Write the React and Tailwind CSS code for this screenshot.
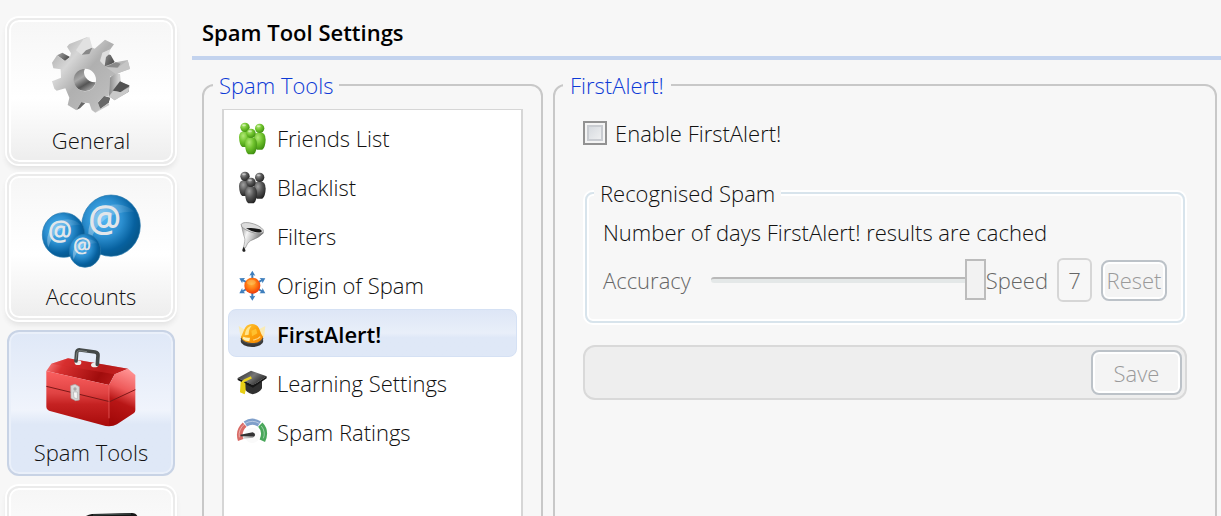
import React, { useState } from "react";
import clsx from "clsx";

function GearIcon() {
  return (
    <svg viewBox="150 105 246 240" className="w-[82px] h-20" aria-hidden="true">
      <defs>
        <linearGradient id="gearFace" x1="0" y1="0.1" x2="1" y2="0.9">
          <stop offset="0" stopColor="#a9a9a9" />
          <stop offset="0.25" stopColor="#d6d6d6" />
          <stop offset="0.45" stopColor="#b0b0b0" />
          <stop offset="0.7" stopColor="#b9b9b9" />
          <stop offset="1" stopColor="#d2d2d2" />
        </linearGradient>
        <linearGradient id="gearHole" x1="0" y1="0" x2="0.6" y2="1">
          <stop offset="0" stopColor="#6a6a6a" />
          <stop offset="0.45" stopColor="#a8a8a8" />
          <stop offset="0.75" stopColor="#555" />
          <stop offset="1" stopColor="#9a9a9a" />
        </linearGradient>
        <linearGradient id="gearDark" x1="0" y1="0" x2="1" y2="0.5">
          <stop offset="0" stopColor="#aaa" />
          <stop offset="1" stopColor="#4c4c4c" />
        </linearGradient>
        <linearGradient id="gearSide" x1="0" y1="0" x2="1" y2="0">
          <stop offset="0" stopColor="#8b8b8b" />
          <stop offset="0.5" stopColor="#d4d4d4" />
          <stop offset="1" stopColor="#606060" />
        </linearGradient>
      </defs>
      <path d="M328 235 L345 218 L360 222 L362 246 L388 256 L386 275 L344 301 L327 289 Z" fill="url(#gearSide)" />
      <path d="M360 244 L388 257 L362 277 L338 272 Z" fill="#535353" />
      <path d="M327 289 L340 272 L362 277 L388 260 L386 275 L344 301 Z" fill="#c9c9c9" />
      <path d="M298 165 L312 158 L332 165 L344 186 L318 204 L298 190 Z" fill="url(#gearDark)" />
      <path d="M243 305 L256 309 L240 325 L229 330 Z" fill="#666" />
      <path d="M294 308 L312 288 L330 294 L326 308 L301 326 Z" fill="url(#gearDark)" />
      <path d="M171 166 L187 158 L210 171 L195 183 Z" fill="url(#gearDark)" />
      <path fillRule="evenodd" fill="url(#gearFace)" d="M213 160 L201 140 L208 132 L262 111 L274 142 L284 146 L315 119 L342 133 L330 149 L308 160 L303 178 L314 199 L347 187 L383 180 L390 206 L346 223 L330 230 L328 268 L326 290 L313 288 L294 307 L301 327 L286 338 L275 330 L268 310 L244 307 L229 331 L203 315 L208 293 L196 265 L170 272 L163 266 L156 244 L183 233 L182 208 L160 205 L156 188 L171 166 L195 183 L210 171 Z M255 206 A33 34 0 1 0 255 274 A33 34 0 1 0 255 206 Z" />
      <path d="M250 118 L268 111 L277 142 L245 164 L228 151 Z" fill="#e1e1e1" />
      <path d="M277 143 L268 162 L245 164 L258 151 Z" fill="#888" />
      <path d="M300 183 L307 158 L331 148 L327 163 L318 171 L314 198 Z" fill="#dedede" />
      <path d="M318 201 L347 187 L362 191 L352 204 Z" fill="#8a8a8a" />
      <path d="M318 202 L354 203 L383 181 L390 207 L347 222 Z" fill="#c5c5c5" />
      <path d="M294 308 L312 289 L330 293 L325 309 L301 326 Z" fill="#686868" />
      <path d="M301 326 L325 309 L328 315 L286 338 Z" fill="#c7c7c7" />
      <path d="M221 239 A34 34 0 0 1 255 206 C245 220 260 248 287 247 C280 270 264 274 255 273 A34 34 0 0 1 221 239 Z" fill="url(#gearHole)" />
    </svg>
  );
}

function AccountsIcon() {
  const balls = [
    { cx: 332, cy: 180, rx: 88, ry: 92, tx: 313, ty: 196, size: 106 },
    { cx: 190, cy: 208, rx: 64, ry: 67, tx: 179, ty: 221, size: 78 },
    { cx: 254, cy: 255, rx: 47, ry: 50, tx: 245, ty: 263, size: 58 },
  ];
  return (
    <svg viewBox="125 85 297 222" className="w-[99px] h-[74px] overflow-visible" aria-hidden="true">
      <defs>
        <radialGradient id="ball" cx="0.38" cy="0.38" r="0.62">
          <stop offset="0" stopColor="#55b8f5" />
          <stop offset="0.5" stopColor="#2c8fd0" />
          <stop offset="0.85" stopColor="#07619f" />
          <stop offset="1" stopColor="#07598f" />
        </radialGradient>
        <linearGradient id="ballShine" x1="0" y1="0" x2="1" y2="0.3">
          <stop offset="0" stopColor="#fff" stopOpacity="0.4" />
          <stop offset="1" stopColor="#fff" stopOpacity="0.02" />
        </linearGradient>
      </defs>
      {balls.map((b) => (
        <g key={b.cx}>
          <ellipse cx={b.cx} cy={b.cy} rx={b.rx} ry={b.ry} fill="url(#ball)" stroke="#2779ad" strokeWidth="2" />
          <path
            d={`M${b.cx - b.rx * 0.72} ${b.cy + b.ry * 0.55} A${b.rx * 0.94} ${b.ry * 0.94} 0 0 1 ${b.cx + b.rx * 0.8} ${b.cy - b.ry * 0.45} Q${b.cx - b.rx * 0.4} ${b.cy - b.ry * 0.5} ${b.cx - b.rx * 0.72} ${b.cy + b.ry * 0.55} Z`}
            fill="url(#ballShine)"
          />
          <text x={b.tx} y={b.ty} fontSize={b.size} textAnchor="middle" fill="#e2e6ea" stroke="#e2e6ea" strokeWidth={b.size / 22}
            fontFamily="Open Sans, sans-serif">@</text>
        </g>
      ))}
    </svg>
  );
}

function ToolboxIcon() {
  return (
    <svg viewBox="136 68 276 240" className="w-[92px] h-20" aria-hidden="true">
      <defs>
        <linearGradient id="boxFront" x1="0" y1="0" x2="0" y2="1">
          <stop offset="0" stopColor="#fb6060" />
          <stop offset="0.4" stopColor="#e04343" />
          <stop offset="0.6" stopColor="#c52222" />
          <stop offset="1" stopColor="#a80b0b" />
        </linearGradient>
        <linearGradient id="boxTop" x1="0" y1="0" x2="1" y2="0.2">
          <stop offset="0" stopColor="#ff8e8e" />
          <stop offset="0.25" stopColor="#d83030" />
          <stop offset="0.75" stopColor="#a00c0c" />
          <stop offset="1" stopColor="#b81a1a" />
        </linearGradient>
        <linearGradient id="boxSide" x1="0.6" y1="0" x2="0.4" y2="1">
          <stop offset="0" stopColor="#ff9191" />
          <stop offset="0.35" stopColor="#ee5a5a" />
          <stop offset="0.6" stopColor="#b81616" />
          <stop offset="1" stopColor="#a20808" />
        </linearGradient>
      </defs>
      <path d="M140 140 L155 118 L205 102 L385 133 L345 150 L328 182 Z" fill="url(#boxTop)" />
      <path d="M205 102 L385 133 L345 150 L155 118 Z" fill="#d62d2d" opacity="0.4" />
      <path d="M140 140 L328 182 V306 L318 305 L148 259 Q140 256 140 248 Z" fill="url(#boxFront)" />
      <path d="M328 182 L345 150 L385 133 L407 152 V258 Q407 264 402 267 L352 300 Q342 306 328 306 Z" fill="url(#boxSide)" />
      <path d="M140 186 L330 232 L407 196" fill="none" stroke="#7d1717" strokeWidth="3" />
      <path d="M328 184 V282" stroke="#f36a6a" strokeWidth="2" />
      <ellipse cx="235" cy="115" rx="10" ry="7" fill="#ececec" />
      <ellipse cx="285" cy="122" rx="11" ry="7" fill="#ececec" />
      <path d="M229 110 L231 84 Q233 76 242 77 L286 83 Q296 85 295 94 L293 120" fill="none" stroke="#444948" strokeWidth="11" strokeLinecap="round" />
      <path d="M229 106 L232 84 Q234 78 242 79 L262 82" fill="none" stroke="#7d8280" strokeWidth="3" />
      <path d="M213 184 L226 180 L239 187 V227 L228 229 L214 222 Z" fill="#d8d8d8" stroke="#a9a3a3" strokeWidth="2" />
      <circle cx="226" cy="194" r="5" fill="#a7a7a7" />
      <path d="M221 203 H233 V224 L223 220 Z" fill="#f6f6f6" stroke="#9c9c9c" strokeWidth="1.5" />
    </svg>
  );
}

function DeviceIcon() {
  return (
    <svg viewBox="0 0 100 60" className="w-[100px] h-[60px]" aria-hidden="true">
      <path d="M41 6 Q45 2 51 1 L91 0 Q96 0 97 5 L95 50 H46 Z" fill="#161616" />
      <path d="M52 2 L90 1" stroke="#3c4a48" strokeWidth="1" />
    </svg>
  );
}

function PeopleIcon({ id, light, mid, dark }) {
  const people = [
    { x: 27, y: 19, by: 54, rx: 18, ry: 24 },
    { x: 71, y: 22, by: 60, rx: 18, ry: 26 },
    { x: 45, y: 37, by: 74, rx: 18, ry: 26 },
  ];
  return (
    <svg viewBox="0 0 96 102" className="w-8 h-[34px] shrink-0" aria-hidden="true">
      <defs>
        <radialGradient id={id} cx="0.35" cy="0.3" r="0.75">
          <stop offset="0" stopColor={light} />
          <stop offset="0.5" stopColor={mid} />
          <stop offset="1" stopColor={dark} />
        </radialGradient>
      </defs>
      {people.map((p) => (
        <g key={p.x} fill={`url(#${id})`}>
          <path d={`M${p.x - p.rx} ${p.by - 6} Q${p.x - p.rx} ${p.by - p.ry} ${p.x} ${p.by - p.ry} Q${p.x + p.rx} ${p.by - p.ry} ${p.x + p.rx} ${p.by - 4} Q${p.x + p.rx - 1} ${p.by + p.ry - 6} ${p.x + 8} ${p.by + p.ry} H${p.x - 8} Q${p.x - p.rx + 1} ${p.by + p.ry - 6} ${p.x - p.rx} ${p.by - 6} Z`} />
          <circle cx={p.x} cy={p.y} r="14" />
          <ellipse cx={p.x - 3} cy={p.y - 6} rx="6" ry="3" fill="#fff" opacity="0.4" />
        </g>
      ))}
    </svg>
  );
}

function FunnelIcon() {
  return (
    <svg viewBox="0 0 96 96" className="size-8 shrink-0" aria-hidden="true">
      <defs>
        <linearGradient id="funnel" x1="0" y1="0" x2="1" y2="0.4">
          <stop offset="0" stopColor="#8a8a8a" />
          <stop offset="0.35" stopColor="#f5f5f5" />
          <stop offset="0.6" stopColor="#c4c4c4" />
          <stop offset="1" stopColor="#666" />
        </linearGradient>
      </defs>
      <path d="M16 13 Q22 45 26 54 Q28 62 22 83 L28 84 Q35 66 44 62 Q72 52 83 38 Z" fill="url(#funnel)" stroke="#777" strokeWidth="1.5" />
      <ellipse cx="49" cy="24" rx="35" ry="13" transform="rotate(18 49 24)" fill="#dcdcdc" stroke="#8b8b8b" strokeWidth="2" />
      <path d="M30 25 Q52 22 72 28 Q80 32 76 36 Q60 42 30 25 Z" fill="#171717" />
      <path d="M23 80 Q17 90 20 94 Q23 97 28 94 Q30 90 23 80 Z" fill="#222" />
    </svg>
  );
}

function OriginIcon() {
  return (
    <svg viewBox="0 0 96 96" className="size-8 shrink-0" aria-hidden="true">
      <defs>
        <radialGradient id="origin" cx="0.45" cy="0.4" r="0.6">
          <stop offset="0" stopColor="#ffb03a" />
          <stop offset="0.5" stopColor="#ff7d14" />
          <stop offset="1" stopColor="#ee3a0a" />
        </radialGradient>
      </defs>
      {[0, 60, 120, 180, 240, 300].map((a) => (
        <g key={a} transform={`rotate(${a} 49 50)`} fill="#3f7fbd">
          <path d="M49 5 L58 20 L52 18 V34 H46 V18 L40 20 Z" />
        </g>
      ))}
      <circle cx="49" cy="50" r="24" fill="url(#origin)" />
      <ellipse cx="46" cy="40" rx="13" ry="8" fill="#ffd070" opacity="0.4" />
    </svg>
  );
}

function AlertIcon() {
  return (
    <svg viewBox="0 0 96 96" className="size-8 shrink-0" aria-hidden="true">
      <defs>
        <linearGradient id="beacon" x1="0" y1="0" x2="1" y2="1">
          <stop offset="0" stopColor="#ffcf45" />
          <stop offset="0.5" stopColor="#fba30c" />
          <stop offset="1" stopColor="#f78400" />
        </linearGradient>
      </defs>
      <path d="M8 24 L32 38 V62 L14 58 Z M88 24 L64 36 V60 L84 58 Z" fill="#ffe9a0" opacity="0.75" />
      <ellipse cx="48" cy="69" rx="34" ry="18" fill="#373737" />
      <ellipse cx="48" cy="62" rx="34" ry="17" fill="#4a4a4a" />
      <path d="M15 58 Q18 50 24 36 Q30 18 48 18 Q66 18 72 38 Q76 50 81 56 Q76 75 48 75 Q22 75 15 58 Z" fill="url(#beacon)" />
      <path d="M28 42 Q33 25 47 23 Q38 32 38 50 L26 52 Z" fill="#ffe58d" />
      <path d="M46 38 L60 32 L64 46 L48 55 Z" fill="#ffc02e" />
      <path d="M22 56 Q30 60 42 59 L40 70 Q26 68 20 62 Z" fill="#fff0b0" />
      <path d="M52 66 Q66 64 73 56" fill="none" stroke="#ffd984" strokeWidth="4" />
    </svg>
  );
}

function LearnIcon() {
  return (
    <svg viewBox="0 0 96 96" className="size-8 shrink-0" aria-hidden="true">
      <defs>
        <linearGradient id="cap" x1="0" y1="0" x2="1" y2="0.6">
          <stop offset="0" stopColor="#222" />
          <stop offset="0.55" stopColor="#777" />
          <stop offset="1" stopColor="#222" />
        </linearGradient>
      </defs>
      <path d="M24 43 L50 54 L78 42 V64 Q70 78 50 82 Q30 76 24 62 Z" fill="#303030" />
      <path d="M5 33 L45 11 L92 28 L51 55 Z" fill="url(#cap)" />
      <path d="M5 33 L51 55 L92 28 V34 L51 62 L5 39 Z" fill="#161616" />
      <path d="M46 31 L25 41 Q19 44 19 52 L18 76" fill="none" stroke="#ead21d" strokeWidth="7" />
      <path d="M14 44 L28 48 L29 70 L26 82 L12 76 Z" fill="#e8cf14" />
    </svg>
  );
}

function RatingIcon() {
  return (
    <svg viewBox="0 0 96 96" className="size-8 shrink-0" aria-hidden="true">
      <path d="M14 72 Q5 45 26 26" fill="none" stroke="#d96b66" strokeWidth="17" />
      <path d="M28 24 Q49 10 70 24" fill="none" stroke="#7f9fca" strokeWidth="18" />
      <path d="M73 26 Q92 46 79 74" fill="none" stroke="#4aa75b" strokeWidth="18" />
      <path d="M10 64 Q6 40 26 24 M28 22 Q49 10 70 22 M76 30 Q90 48 82 67" fill="none" stroke="#fff" strokeWidth="3" opacity="0.45" />
      <circle cx="49" cy="58" r="23" fill="#fafafa" />
      <path d="M13 56 L50 49 Q62 54 54 62 L14 61 Z" fill="#333" />
      <path d="M22 66 L52 64" stroke="#aaa" strokeWidth="3" />
    </svg>
  );
}

const NAV = [
  { label: "General", icon: <GearIcon /> },
  { label: "Accounts", icon: <AccountsIcon /> },
  { label: "Spam Tools", icon: <ToolboxIcon /> },
  { label: "", icon: <DeviceIcon /> },
];

const TOOLS = [
  { label: "Friends List", icon: <PeopleIcon id="friends" light="#b2ea76" mid="#6fc22c" dark="#3f8f10" /> },
  { label: "Blacklist", icon: <PeopleIcon id="blacklist" light="#a0a0a0" mid="#555" dark="#222" /> },
  { label: "Filters", icon: <FunnelIcon /> },
  { label: "Origin of Spam", icon: <OriginIcon /> },
  { label: "FirstAlert!", icon: <AlertIcon /> },
  { label: "Learning Settings", icon: <LearnIcon /> },
  { label: "Spam Ratings", icon: <RatingIcon /> },
];

function NavButton({ item, active, onClick }) {
  return (
    <button
      onClick={onClick}
      aria-label={item.label || "Devices"}
      className={clsx(
        "flex h-[146px] shrink-0 flex-col items-center justify-end rounded-xl border-2 pb-2",
        active
          ? "border-[#c8d3e5] bg-linear-to-b from-[#dfe8f7] via-[#f0f4fc] via-55% to-[#dfe8f7] to-65% shadow-[inset_0_0_0_2px_#eaf0fa]"
          : "border-[#ebebeb] bg-linear-to-b from-[#f6f6f6] via-white via-55% to-[#ededed] shadow-[0_0_0_2px_#fff,inset_0_0_0_2px_#fff,0_4px_5px_1px_#e3e3e3]"
      )}
    >
      <span className="flex flex-1 items-center justify-center pt-1">{item.icon}</span>
      <span className="h-7">{item.label}</span>
    </button>
  );
}

export default function App() {
  const [page, setPage] = useState("Spam Tools");
  const [tool, setTool] = useState("FirstAlert!");
  const [enabled, setEnabled] = useState(false);

  return (
    <div className="flex h-screen overflow-hidden bg-[#f7f7f7] font-['Open_Sans',sans-serif] text-[22px] leading-7 font-light text-[#111]">
      <nav className="flex w-48 shrink-0 flex-col gap-[10px] pt-[18px] pr-[17px] pl-[7px]">
        {NAV.map((item) => (
          <NavButton key={item.label} item={item} active={item.label === page} onClick={() => setPage(item.label)} />
        ))}
      </nav>

      <main className="flex min-w-0 flex-1 flex-col">
        <h1 className="border-b-4 border-[#c3d3ee] pt-[18px] pb-[10px] pl-[10px] font-semibold text-black">Spam Tool Settings</h1>

        <div className="-mb-8 flex min-h-0 flex-1 gap-[10px] pt-[11px] pr-1 pl-[10px]">
          <fieldset className="flex w-[341px] shrink-0 flex-col rounded-xl border-2 border-[#c8c8c8] px-[18px]">
            <legend className="-ml-[9px] px-[6px] text-[#0d3ad6]">Spam Tools</legend>
            <ul className="mt-[10px] flex h-full flex-col gap-px border-2 border-t border-[#d6d6d6] bg-white px-1 pt-[3px]">
              {TOOLS.map((t) => (
                <li key={t.label}>
                  <button
                    onClick={() => setTool(t.label)}
                    className={clsx(
                      "flex h-12 w-full items-center gap-[9px] rounded-lg border px-[7px] pt-[2px] text-left",
                      t.label === tool
                        ? "border-[#d5e1f4] bg-linear-to-b from-[#dde6f6] via-[#e9eff9] via-50% to-[#dfe8f7] to-60% font-semibold text-black"
                        : "border-transparent"
                    )}
                  >
                    {t.icon}
                    <span>{t.label}</span>
                  </button>
                </li>
              ))}
            </ul>
          </fieldset>

          <fieldset className="min-w-0 flex-1 rounded-xl border-2 border-[#c8c8c8] px-7">
            <legend className="-ml-5 px-[7px] text-[#0d3ad6]">FirstAlert!</legend>

            <label className="mt-5 flex w-fit items-center gap-2">
              <input
                type="checkbox"
                checked={enabled}
                onChange={(e) => setEnabled(e.target.checked)}
                className="size-6 appearance-none border-2 border-[#929292] bg-linear-to-br from-[#cfd4da] to-[#f6f6f6] shadow-[inset_0_0_0_2px_#f4f4f4,inset_0_0_0_4px_#c9ccd1] checked:bg-[#4a6fb5]"
              />
              Enable FirstAlert!
            </label>

            <fieldset className="mx-[2px] mt-8 min-w-0 rounded-lg border-2 border-[#d8e4ec] px-4 pb-[19px] shadow-[0_0_0_2px_#fff,inset_0_0_0_2px_#fff]">
              <legend className="-ml-[9px] bg-[#f7f7f7] px-[6px]">Recognised Spam</legend>
              <p className="mt-[11px]">Number of days FirstAlert! results are cached</p>
              <div className="mt-3 flex items-center text-[#666]">
                <label htmlFor="days">Accuracy</label>
                <input
                  id="days"
                  type="range"
                  min="1"
                  max="7"
                  defaultValue="7"
                  disabled
                  className="ml-5 h-[41px] min-w-0 flex-1 appearance-none bg-transparent [&::-webkit-slider-runnable-track]:h-[6px] [&::-webkit-slider-runnable-track]:rounded-full [&::-webkit-slider-runnable-track]:border-t-2 [&::-webkit-slider-runnable-track]:border-[#b9b9b9] [&::-webkit-slider-runnable-track]:bg-[#e4e8e8] [&::-webkit-slider-thumb]:-mt-5 [&::-webkit-slider-thumb]:h-[41px] [&::-webkit-slider-thumb]:w-[21px] [&::-webkit-slider-thumb]:appearance-none [&::-webkit-slider-thumb]:border-2 [&::-webkit-slider-thumb]:border-[#bcbcbc] [&::-webkit-slider-thumb]:bg-[#f2f2f2]"
                />
                <span>Speed</span>
                <input
                  type="text"
                  aria-label="Days"
                  value="7"
                  readOnly
                  disabled
                  className="ml-[9px] h-11 w-[35px] rounded-md border-2 border-[#d6d6d6] text-center"
                />
                <button disabled className="ml-[9px] h-[41px] w-[66px] rounded-lg border-2 border-[#bcc2c8] bg-[#f4f4f4] text-[#9a9a9a] shadow-[inset_0_0_0_2px_#fff]">
                  Reset
                </button>
              </div>
            </fieldset>

            <div className="mt-[22px] flex justify-end rounded-xl border-2 border-[#d9d9d9] bg-[#eee] py-[3px] pr-[3px]">
              <button disabled className="h-[45px] w-[91px] rounded-lg border-2 border-[#bcc2c8] bg-[#f4f4f4] text-[#9a9a9a] shadow-[inset_0_0_0_2px_#fff]">
                Save
              </button>
            </div>
          </fieldset>
        </div>
      </main>
    </div>
  );
}
